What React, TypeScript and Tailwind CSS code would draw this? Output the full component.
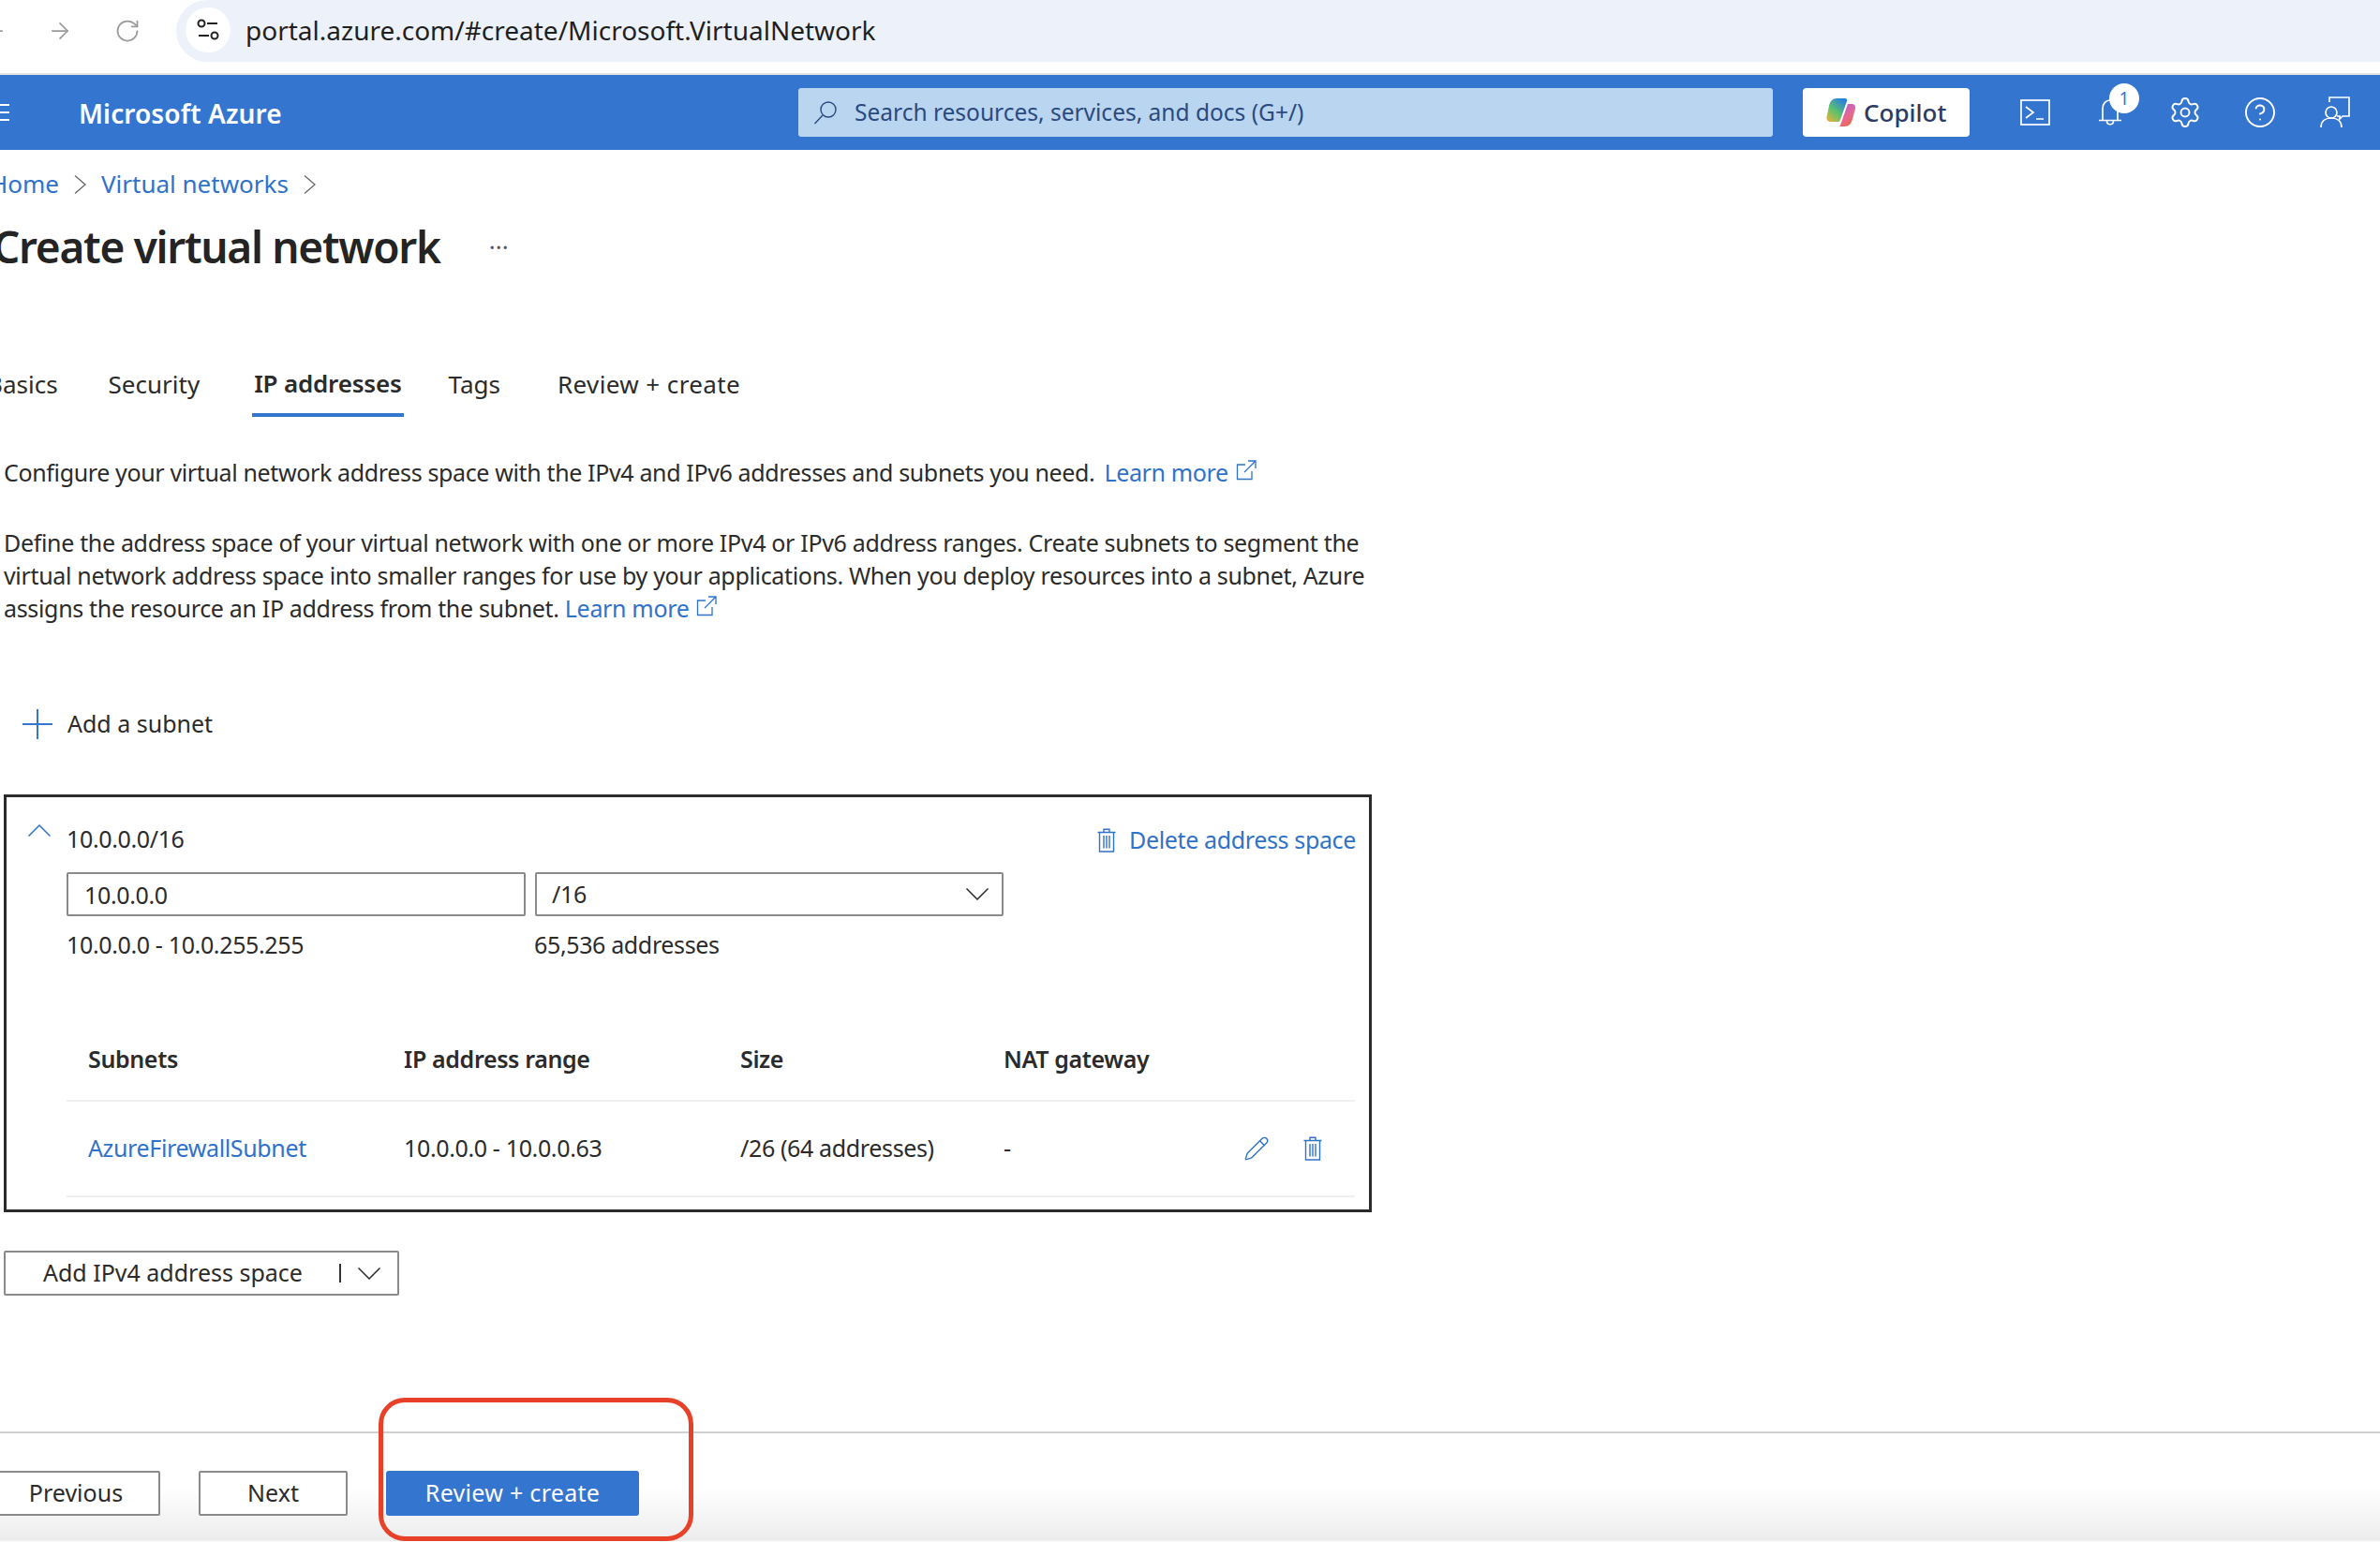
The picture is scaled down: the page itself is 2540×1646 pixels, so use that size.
import { ArrowLeft, ArrowRight, RotateCw, Settings, CircleHelp, Pencil } from 'lucide-react';

function TrashIcon({ className }: { className: string }) {
  return (
    <svg viewBox="0 0 20 26" fill="none" stroke="currentColor" strokeWidth="1.4" className={className}>
      <path d="M0.5 4.5h19M7 4.5V1.2h6v3.3M2.5 4.5v20.5h15V4.5M7 8v13.5M10 8v13.5M13 8v13.5" />
    </svg>
  );
}

function ExternalIcon({ className }: { className: string }) {
  return (
    <svg viewBox="0 0 22 22" fill="none" stroke="currentColor" strokeWidth="1.3" className={className}>
      <path d="M10 5H1.5v15.5H17V12M13 1h8v8M21 1L9 13" />
    </svg>
  );
}

function Crumb() {
  return (
    <svg viewBox="0 0 13 20" fill="none" stroke="#666" strokeWidth="1.3" className="h-[20px] w-[13px] shrink-0">
      <path d="M1 0.5L12 10L1 19.5" />
    </svg>
  );
}

function Chevron({ className, up = false }: { className: string; up?: boolean }) {
  return (
    <svg viewBox="0 0 24 13" fill="none" stroke="currentColor" strokeWidth="1.5" className={className}>
      <path d={up ? 'M0.5 12.5L12 1L23.500 12.5' : 'M0.5 0.5L12 12L23.500 0.5'} />
    </svg>
  );
}

function LearnMore({ className = '' }: { className?: string }) {
  return (
    <span className={`inline-flex items-center gap-[8px] text-[#2f72c9] ${className}`}>
      Learn more
      <ExternalIcon className="h-[22px] w-[22px] -translate-y-[3px]" />
    </span>
  );
}

function CopilotLogo() {
  return (
    <svg viewBox="0 0 32 32" className="h-[32px] w-[32px]">
      <defs>
        <linearGradient id="cpA" x1="0" y1="1" x2="0.7" y2="0">
          <stop offset="0" stopColor="#f2b134" />
          <stop offset="0.5" stopColor="#5cc26d" />
          <stop offset="1" stopColor="#2b7fe0" />
        </linearGradient>
        <linearGradient id="cpB" x1="0.2" y1="0" x2="0.8" y2="1">
          <stop offset="0" stopColor="#b45fd8" />
          <stop offset="0.55" stopColor="#e8688f" />
          <stop offset="1" stopColor="#e9673a" />
        </linearGradient>
      </defs>
      <path d="M11 1h9c2 0 2.6 1.2 2 3l-7 20c-.6 1.6-1.6 2-3 2H5c-3 0-5-2-4.500-5L3 9c1-5 4-8 8-8z" fill="url(#cpA)" />
      <path d="M14 31h6c4 0 7-3 8-8l3-11c.8-3-1-5-4-5h-4l-7 20c-.5 1.600-1 3-2 4z" fill="url(#cpB)" />
    </svg>
  );
}

function BrowserBar() {
  return (
    <div className="flex h-[80px] border-b-[2px] border-[#e3e3e3] bg-white">
      <div className="flex h-[66px] w-[188px] shrink-0 items-center text-[#9b9b9b]">
        <ArrowLeft className="ml-[-20px] h-[28px] w-[28px]" strokeWidth={1.5} />
        <ArrowRight className="ml-[42px] h-[28px] w-[28px]" strokeWidth={1.5} />
        <RotateCw className="ml-[44px] h-[28px] w-[28px]" strokeWidth={1.5} />
      </div>
      <div className="flex h-[66px] flex-1 items-center rounded-l-[33px] bg-[#edf2fa] pb-[3px] pl-[10px]">
        <div className="flex h-[48px] w-[48px] items-center justify-center rounded-full bg-white">
          <svg viewBox="0 0 26 26" fill="none" stroke="#222" strokeWidth="2" className="h-[26px] w-[26px]">
            <circle cx="6" cy="6" r="3.500" />
            <path d="M12 6h11M3 19h11" />
            <circle cx="20" cy="19" r="3.500" />
          </svg>
        </div>
        <span className="ml-[16px] text-[28px] text-[#1f1f1f]">portal.azure.com/#create/Microsoft.VirtualNetwork</span>
      </div>
    </div>
  );
}

function Header() {
  return (
    <div className="flex h-[80px] items-center bg-[#3476cf] text-white">
      <div className="flex w-[84px] shrink-0 flex-col gap-[6px]">
        <div className="h-[2px] w-[10px] bg-white" />
        <div className="h-[2px] w-[10px] bg-white" />
        <div className="h-[2px] w-[10px] bg-white" />
      </div>
      <span className="w-[768px] shrink-0 pt-[1px] text-[28px] font-semibold tracking-[0.1px]">Microsoft Azure</span>
      <div className="flex h-[52px] w-[1040px] shrink-0 items-center gap-[18px] rounded-[3px] bg-[#b9d5f0] pl-[16px] text-[24.5px] text-[#2a4a80]">
        <svg viewBox="0 0 26 26" fill="none" stroke="currentColor" strokeWidth="1.400" className="h-[26px] w-[26px]">
          <circle cx="16" cy="10" r="8" />
          <path d="M10 16L1.500 25" />
        </svg>
        Search resources, services, and docs (G+/)
      </div>
      <div className="ml-[32px] flex h-[52px] w-[178px] shrink-0 items-center gap-[8px] rounded-[4px] bg-white pl-[25px] text-[26px] font-medium text-[#2d3a63]">
        <CopilotLogo />
        Copilot
      </div>
      <svg viewBox="0 0 32 28" fill="none" stroke="currentColor" strokeWidth="1.700" className="ml-[54px] h-[28px] w-[32px]">
        <rect x="1" y="1" width="30" height="26" />
        <path d="M6 8l8 6-8 6M17 21h8" />
      </svg>
      <div className="relative ml-[52px] h-[30px] w-[24px]">
        <svg viewBox="0 0 24 30" fill="none" stroke="currentColor" strokeWidth="1.700" className="h-[30px] w-[24px]">
          <path d="M4 23V11C4 6 7 2 12 2s8 4 8 9v12M0 23.500h24M8.500 24c0 5 7 5 7 0" />
        </svg>
        <div className="absolute left-[11px] top-[-16px] flex h-[32px] w-[32px] items-center justify-center rounded-full bg-white text-[19px] text-[#3476cf]">1</div>
      </div>
      <Settings className="ml-[50px] h-[36px] w-[36px]" strokeWidth={1.300} />
      <CircleHelp className="ml-[44px] h-[36px] w-[36px]" strokeWidth={1.300} />
      <svg viewBox="0 0 32 34" fill="none" stroke="currentColor" strokeWidth="1.700" className="ml-[46px] h-[34px] w-[32px]">
        <path d="M10 6V1h21v20h-7l-3 3v-3h-3" />
        <circle cx="12" cy="17" r="6" />
        <path d="M1 33c0-7 5-10 11-10s11 3 11 10" />
      </svg>
    </div>
  );
}

function Tabs() {
  return (
    <div className="mt-[83px] flex h-[69px] text-[26px] text-[#2b2b2b]">
      <span className="ml-[-14px] pt-[15px]">Basics</span>
      <span className="ml-[54px] pt-[15px]">Security</span>
      <div className="ml-[56px] h-[69px] border-b-[4px] border-[#3476cf] px-[2px] pt-[14px] font-semibold tracking-[-0.2px]">IP addresses</div>
      <span className="ml-[48px] pt-[15px]">Tags</span>
      <span className="ml-[61px] pt-[15px] tracking-[0.4px]">Review + create</span>
    </div>
  );
}

function AddressBox() {
  return (
    <div className="ml-[4px] h-[446px] w-[1460px] border-[3px] border-[#2b2b2b] text-[25px] tracking-[-0.36px] text-[#2b2b2b]">
      <div className="flex h-[80px] items-start pt-[27px]">
        <Chevron up className="ml-[23px] mt-[2px] h-[13px] w-[24px] text-[#2f72c9]" />
        <span className="ml-[17px] mt-[-1px]">10.0.0.0/16</span>
        <div className="ml-auto mr-[14px] flex items-center gap-[14px] text-[#2f72c9]">
          <TrashIcon className="h-[26px] w-[20px]" />
          Delete address space
        </div>
      </div>
      <div className="ml-[64px] flex gap-[10px]">
        <div className="flex h-[47px] w-[490px] items-center rounded-[2px] border-[2px] border-[#8a8a8a] pl-[17px] pt-[2px]">10.0.0.0</div>
        <div className="flex h-[47px] w-[500px] items-center justify-between rounded-[2px] border-[2px] border-[#8a8a8a] pl-[16px] pr-[14px]">
          /16
          <Chevron className="h-[13px] w-[24px]" />
        </div>
      </div>
      <div className="ml-[64px] mt-[12px] flex">
        <span className="w-[499px]">10.0.0.0 - 10.0.255.255</span>
        <span>65,536 addresses</span>
      </div>
      <div className="ml-[64px] mt-[60px] w-[1375px]">
        <div className="grid h-[88px] grid-cols-[337px_359px_281px_1fr] items-center border-b-[2px] border-[#f0f0f0] pl-[23px] font-semibold">
          <span>Subnets</span>
          <span>IP address range</span>
          <span>Size</span>
          <span>NAT gateway</span>
        </div>
        <div className="grid h-[102px] grid-cols-[337px_359px_281px_1fr] items-center border-b-[2px] border-[#f0f0f0] pl-[23px]">
          <span className="text-[#2f72c9]">AzureFirewallSubnet</span>
          <span>10.0.0.0 - 10.0.0.63</span>
          <span>/26 (64 addresses)</span>
          <div className="flex items-center">
            <span>-</span>
            <Pencil className="ml-[248px] h-[28px] w-[28px] text-[#2f72c9]" strokeWidth={1.200} />
            <TrashIcon className="ml-[36px] h-[26px] w-[20px] text-[#2f72c9]" />
          </div>
        </div>
      </div>
    </div>
  );
}

function Footer() {
  return (
    <div className="relative mt-[145px] h-[117px] border-t-[2px] border-[#d0d0d0] bg-gradient-to-b from-white from-50% to-[#ececec] text-[25px]">
      <div className="mt-[40px] flex">
        <div className="ml-[-20px] flex h-[48px] w-[191px] items-center justify-center rounded-[2px] border-[2px] border-[#8a8a8a] bg-white pl-[11px] text-[#2b2b2b]">Previous</div>
        <div className="ml-[41px] flex h-[48px] w-[159px] items-center justify-center rounded-[2px] border-[2px] border-[#8a8a8a] bg-white text-[#2b2b2b]">Next</div>
        <div className="ml-[41px] flex h-[48px] w-[270px] items-center justify-center rounded-[3px] bg-[#3476cf] tracking-[0.3px] text-white">Review + create</div>
      </div>
      <div className="absolute left-[404px] top-[-38px] h-[153px] w-[336px] rounded-[28px] border-[5px] border-[#e8412a]" />
    </div>
  );
}

export default function App() {
  return (
    <div className="h-[1646px] w-[2540px] overflow-hidden bg-white font-['Noto_Sans',sans-serif] text-[#2b2b2b]">
      <BrowserBar />
      <Header />
      <div className="flex h-[73px] items-center text-[26px] text-[#2f72c9]">
        <span className="ml-[-11px]">Home</span>
        <span className="ml-[16px]"><Crumb /></span>
        <span className="ml-[16px]">Virtual networks</span>
        <span className="ml-[16px]"><Crumb /></span>
      </div>
      <div className="flex h-[60px] items-center">
        <span className="ml-[-8px] text-[46px] font-semibold tracking-[-1.3px] text-[#242424]">Create virtual network</span>
        <span className="ml-[52px] text-[26px] text-[#555]">···</span>
      </div>
      <Tabs />
      <div className="ml-[4px] mt-[42px] flex text-[25px] leading-[35px] tracking-[-0.36px]">
        Configure your virtual network address space with the IPv4 and IPv6 addresses and subnets you need.
        <LearnMore className="ml-[10px]" />
      </div>
      <div className="ml-[4px] mt-[40px] w-[1470px] text-[25px] leading-[35px] tracking-[-0.33px]">
        Define the address space of your virtual network with one or more IPv4 or IPv6 address ranges. Create subnets to segment the virtual network address space into smaller ranges for use by your applications. When you deploy resources into a subnet, Azure assigns the resource an IP address from the subnet. <LearnMore />
      </div>
      <div className="mt-[90px] flex h-[32px] items-center text-[25px]">
        <svg viewBox="0 0 32 32" fill="none" stroke="#3476cf" strokeWidth="2" className="ml-[24px] h-[32px] w-[32px]">
          <path d="M16 0v32M0 16h32" />
        </svg>
        <span className="ml-[16px]">Add a subnet</span>
      </div>
      <div className="mt-[59px]">
        <AddressBox />
      </div>
      <div className="ml-[4px] mt-[41px] flex h-[48px] w-[422px] items-center rounded-[2px] border-[2px] border-[#8a8a8a] pl-[40px] text-[25px]">
        <span className="w-[316px]">Add IPv4 address space</span>
        <div className="h-[20px] w-[2px] bg-[#333]" />
        <Chevron className="ml-[18px] h-[13px] w-[24px]" />
      </div>
      <Footer />
    </div>
  );
}
